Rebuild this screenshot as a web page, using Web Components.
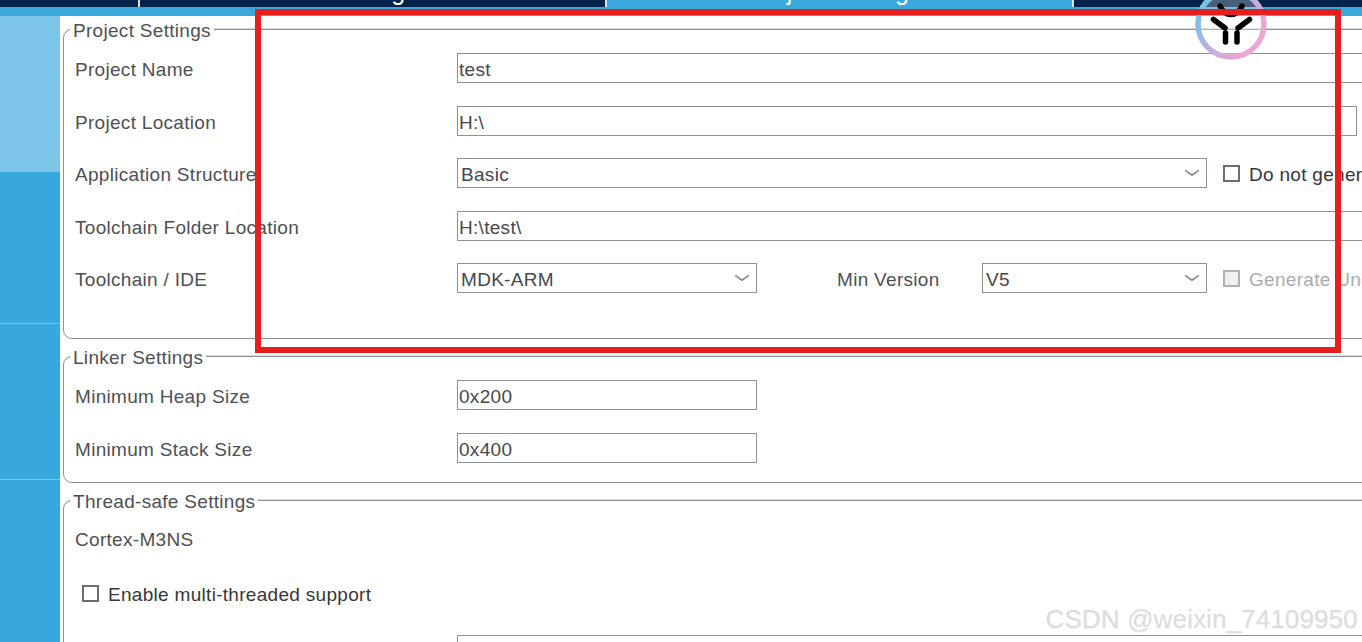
<!DOCTYPE html>
<html lang="en"><head><meta charset="utf-8"><title>Project Settings</title>
<style>html,body{margin:0;padding:0;background:#fff;overflow:hidden}</style></head>
<body>
<stm-app>
  <stm-group slot="main" legend="Project Settings" pad="45">
    <form-row label="Project Name"><text-field style="width:1000px">test</text-field></form-row>
    <form-row label="Project Location"><text-field style="width:900px">H:\</text-field></form-row>
    <form-row label="Application Structure"><combo-box style="width:750px">Basic</combo-box><check-box style="margin-left:16px">Do not generate the main()</check-box></form-row>
    <form-row label="Toolchain Folder Location"><text-field style="width:1000px">H:\test\</text-field></form-row>
    <form-row label="Toolchain / IDE"><combo-box style="width:300px">MDK-ARM</combo-box><field-label style="width:145px;margin-left:80px">Min Version</field-label><combo-box style="width:225px">V5</combo-box><check-box disabled style="margin-left:16px">Generate Under Root</check-box></form-row>
  </stm-group>
  <stm-group slot="main" legend="Linker Settings" pad="19.5">
    <form-row label="Minimum Heap Size"><text-field style="width:300px">0x200</text-field></form-row>
    <form-row label="Minimum Stack Size"><text-field style="width:300px">0x400</text-field></form-row>
  </stm-group>
  <stm-group slot="main" legend="Thread-safe Settings" pad="0" gap="0">
    <form-row label="Cortex-M3NS" style="margin-top:-1px"></form-row>
    <check-box style="margin:25px 0 0 7px">Enable multi-threaded support</check-box>
    <form-row style="margin-top:27px"><text-field style="width:1000px"></text-field></form-row>
  </stm-group>
</stm-app>
<script>
function def(name, css, html, extra){
  customElements.define(name, class extends HTMLElement{
    constructor(){super();const r=this.attachShadow({mode:'open'});r.innerHTML='<style>'+css+'</style>'+html;}
    connectedCallback(){ if(extra) extra(this,this.shadowRoot); }
  });
}
const FONT='font:19px/34px "Liberation Sans",Arial,sans-serif;letter-spacing:.3px;';
def('stm-tab',
 `:host{display:block;flex:none;height:7px;overflow:hidden;background:#03234b;color:#fff;text-align:center;box-sizing:border-box;border-right:2px solid #d9e2ea}
  :host([active]){background:#39a9dc}
  :host([last]){border-right:0}
  div{font:25px/24px "Liberation Sans",Arial,sans-serif;margin-top:-21px;white-space:nowrap}`,
 `<div><slot></slot></div>`);
def('stm-sideitem',
 `:host{display:block;background:#38a8dc;border-bottom:1px solid #7cc2e6;box-sizing:border-box}
  :host([active]){background:#7dc5e9;border-bottom:0}
  :host([last]){border-bottom:0;flex:1}`,``);
def('field-label',
 `:host{display:block;flex:none;height:30px;${FONT}color:#4e5056;white-space:nowrap}`,`<slot></slot>`);
def('form-row',
 `:host{display:grid;grid-template-columns:382px 1fr;height:30px}
  .v{display:flex;align-items:center;min-width:0}
  field-label{white-space:nowrap}`,
 `<field-label></field-label><div class="v"><slot></slot></div>`,
 (el,r)=>{r.querySelector('field-label').textContent=el.getAttribute('label')||'';});
def('text-field',
 `:host{display:block;flex:none;box-sizing:border-box;height:30px;border:1px solid #8d9299;background:#fff;padding:0 1px;${FONT}line-height:32px;color:#46484e;white-space:nowrap;overflow:hidden}`,
 `<slot></slot>`);
def('combo-box',
 `:host{display:flex;flex:none;align-items:center;justify-content:space-between;box-sizing:border-box;height:30px;border:1px solid #8d9299;background:#fff;padding:0 6px 0 3px;${FONT}line-height:32px;color:#46484e;white-space:nowrap}
  span{padding-top:4px}
  svg{display:block;flex:none}`,
 `<span><slot></slot></span><svg width="16" height="8" viewBox="0 0 16 8"><path d="M1.2 1.4 8 6.2 14.8 1.4" fill="none" stroke="#85888c" stroke-width="1.6"/></svg>`);
def('check-box',
 `:host{display:flex;flex:none;align-items:center;gap:9px;height:30px;${FONT}line-height:32px;color:#35373b;white-space:nowrap}
  i{display:block;box-sizing:border-box;width:17px;height:17px;margin-top:1px;border:2px solid #6a6d72;background:#fff}
  span{padding-top:4px}
  :host([disabled]){color:#ababae}
  :host([disabled]) i{border-color:#aeb1b5;background:#eef0f3}`,
 `<i></i><span><slot></slot></span>`);
def('stm-group',
 `:host{display:block;position:relative;box-sizing:border-box;width:1500px;border:1px solid #8d9299;border-radius:9px;box-shadow:0 -1px 0 #d8dadc;padding:23px 0 var(--pad,0) 11px}
  .c{display:flex;flex-direction:column;gap:var(--gap,22.5px)}
  .l{position:absolute;left:6px;top:-16px;background:#fff;padding:0 3px;${FONT}color:#4e5056;white-space:nowrap}`,
 `<div class="l"></div><div class="c"><slot></slot></div>`,
 (el,r)=>{r.querySelector('.l').textContent=el.getAttribute('legend');
   el.style.setProperty('--pad',(el.getAttribute('pad')||0)+'px');
   if(el.hasAttribute('gap'))el.style.setProperty('--gap',el.getAttribute('gap')+'px');});
def('stm-logo',
 `:host{position:absolute;left:1195px;top:-12px;width:72px;height:72px;display:block}svg{display:block}`,
 `<svg width="72" height="72" viewBox="1195 -12 72 72">
   <defs><linearGradient id="g" x1="0" y1=".1" x2=".9" y2=".9"><stop offset="0" stop-color="#62c8e4"/><stop offset=".42" stop-color="#a9b4e6"/><stop offset=".85" stop-color="#eda6d2"/></linearGradient></defs>
   <circle cx="1231" cy="24" r="33" fill="#fff" fill-opacity=".28" stroke="url(#g)" stroke-width="5.5"/>
   <g fill="none" stroke="#000" stroke-width="5.5" stroke-linecap="round">
    <path d="M1220 6Q1224 14.500 1231 14.500Q1238 14.500 1242 6"/>
    <path d="M1213.500 19.500 1225 28"/><path d="M1249.500 19.500 1238 28"/>
    <path d="M1225.500 33V42"/><path d="M1237 33V42"/>
   </g></svg>`);
def('red-box',
 `:host{position:absolute;left:254.5px;top:9px;width:1086.5px;height:344px;box-sizing:border-box;border:6px solid #e61e1e;display:block}`,``);
def('wm-text',
 `:host{position:absolute;left:1045.5px;top:604px;font:26px/30px "Liberation Sans",Arial,sans-serif;letter-spacing:.12px;color:#dcdcdc;white-space:nowrap;text-shadow:.6px .6px 0 #f4f4f4}`,
 `<slot></slot>`);
def('stm-app',
 `:host{display:block;position:relative;width:1362px;height:642px;overflow:hidden;background:#fff}
  .tabs{display:flex;width:1362px;height:7px}
  .strip{height:9px;background:#39a9dc}
  .body{display:flex;height:626px}
  .side{flex:none;width:60px;display:flex;flex-direction:column;background:#38a8dc}
  .main{flex:1;min-width:0;overflow:hidden;padding:13px 0 0 3px;display:flex;flex-direction:column;gap:17px}
  ::slotted(stm-group){flex:none}`,
 `<div class="tabs">
    <stm-tab style="width:140px"></stm-tab>
    <stm-tab style="width:467px">Clock Configuration</stm-tab>
    <stm-tab active style="width:467px">Project Manager</stm-tab>
    <stm-tab last style="width:288px"></stm-tab>
  </div>
  <div class="strip"></div>
  <div class="body">
    <div class="side">
      <stm-sideitem active style="height:156px"></stm-sideitem>
      <stm-sideitem style="height:152px"></stm-sideitem>
      <stm-sideitem style="height:156px"></stm-sideitem>
      <stm-sideitem last></stm-sideitem>
    </div>
    <div class="main"><slot name="main"></slot></div>
  </div>
  <stm-logo></stm-logo><red-box></red-box><wm-text>CSDN @weixin_74109950</wm-text>`);
</script>
</body></html>
